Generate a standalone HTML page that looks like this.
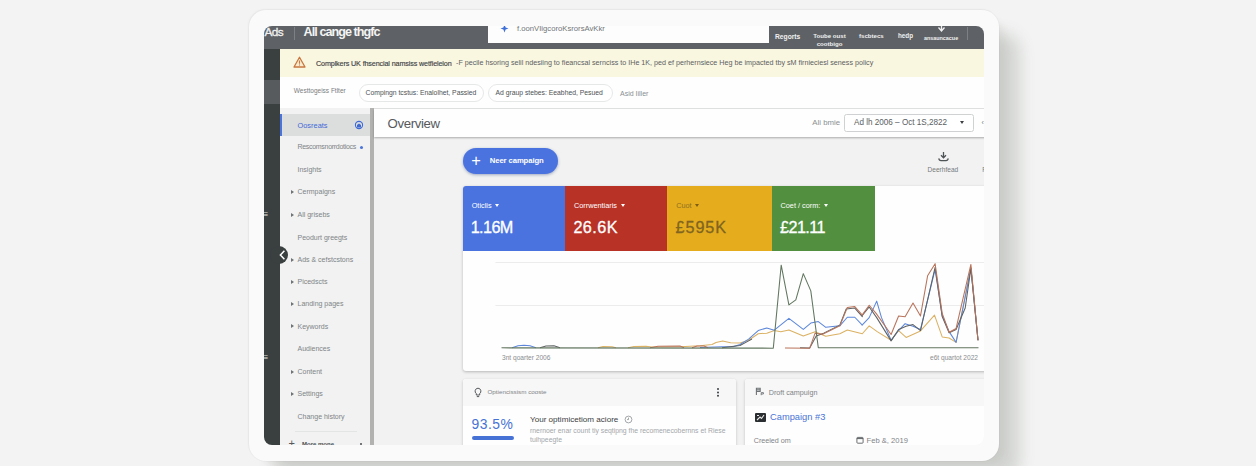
<!DOCTYPE html>
<html><head><meta charset="utf-8">
<style>
html,body{margin:0;padding:0;}
body{width:1256px;height:466px;overflow:hidden;position:relative;background:#f2f3f2;font-family:"Liberation Sans",sans-serif;}
.abs{position:absolute;}
#bg{left:0;top:0;width:1256px;height:466px;background:#f2f3f2;}
#shadow{left:252px;top:14px;width:745px;height:445px;border-radius:17px;box-shadow:22px 20px 16px rgba(95,98,90,.22),8px 5px 6px rgba(95,98,90,.06);}
#frame{left:249.3px;top:10px;width:749.7px;height:451px;border-radius:17px;background:#f9faf9;box-shadow:0 0 0 1px rgba(0,0,0,.02),-1px -1px 2px rgba(0,0,0,.035);}
#screen{left:264px;top:26px;width:720px;height:419px;border-radius:8px;overflow:hidden;background:#f1f2f1;}
#screen .abs{white-space:nowrap;}
.t{line-height:1;}
</style></head><body>
<div id="bg" class="abs"></div>
<div id="shadow" class="abs"></div>
<div id="frame" class="abs"></div>
<div id="screen" class="abs">
<!-- coordinates inside screen are page coords minus (264,26) -->
<div id="in" class="abs" style="left:-264px;top:-26px;width:1256px;height:466px;">
<div class="abs" style="left:264px;top:26px;width:720px;height:23.2px;background:#5e6266;"></div>
<div class="abs t" style="left:264.4px;top:27px;font-size:11.8px;color:#f1f1f1;letter-spacing:-.55px;-webkit-text-stroke:.3px #f1f1f1;">Ads</div>
<div class="abs" style="left:294px;top:27px;width:1px;height:12.5px;background:#7d8084;"></div>
<div class="abs t" style="left:303.6px;top:26.2px;font-size:12.6px;color:#f4f4f4;font-weight:bold;letter-spacing:-.95px;">All cange thgfc</div>
<div class="abs" style="left:488.2px;top:26px;width:281px;height:17.4px;background:#fdfdfd;"></div>
<svg class="abs" style="left:499.8px;top:24.2px;" width="9" height="9" viewBox="0 0 9 9"><path d="M4.5 0.5 L5.6 3.4 L8.5 4.5 L5.6 5.6 L4.5 8.5 L3.4 5.6 L0.5 4.5 L3.4 3.4Z" fill="#3f6fd8"/></svg>
<div class="abs t" style="left:517px;top:24.5px;font-size:7.7px;color:#727578;">f.oonVIigcoroKsrorsAvKkr</div>
<div class="abs t" style="left:775px;top:33.6px;font-size:6.7px;color:#f0f0f0;font-weight:bold;">Regorts</div>
<div class="abs t" style="left:809.5px;top:32.4px;width:40px;text-align:center;font-size:6.1px;line-height:8.1px;color:#f0f0f0;font-weight:bold;white-space:normal;">Toube oust cootbigo</div>
<div class="abs t" style="left:859px;top:33.2px;font-size:6.1px;color:#f0f0f0;font-weight:bold;">fscbtecs</div>
<div class="abs t" style="left:898px;top:33.2px;font-size:6.3px;color:#f0f0f0;font-weight:bold;">hedp</div>
<svg class="abs" style="left:936px;top:25px;" width="11" height="9" viewBox="0 0 11 9"><path d="M5.5 0v7M2.5 2.5L5.5 6L8.5 2.5" stroke="#f0f0f0" stroke-width="1.3" fill="none"/></svg>
<div class="abs t" style="left:924px;top:35.6px;font-size:5.4px;color:#f0f0f0;font-weight:bold;">ansauncacue</div>
<div class="abs" style="left:967px;top:27px;width:1px;height:12.5px;background:#7d8084;"></div>
<div class="abs" style="left:264px;top:49px;width:16px;height:400px;background:#3a3f40;"></div>
<div class="abs" style="left:264px;top:80px;width:16px;height:24px;background:#585b5d;"></div>
<div class="abs t" style="left:263.6px;top:210.6px;font-size:8px;color:#e4e5e5;font-weight:bold;">≡</div>
<div class="abs t" style="left:263.6px;top:353.6px;font-size:8px;color:#e4e5e5;font-weight:bold;">≡</div>

<div class="abs" style="left:279.5px;top:49px;width:710px;height:28px;background:#faf7e1;"></div>
<svg class="abs" style="left:293px;top:56px;" width="13" height="12" viewBox="0 0 13 12"><path d="M6.5 1.2L12 11H1Z" fill="#f7ecd0" stroke="#c9773f" stroke-width="1.3" stroke-linejoin="round"/><path d="M6.5 4.5v3.2M6.5 8.6v1" stroke="#c9773f" stroke-width="1.1"/></svg>
<div class="abs t" style="left:316px;top:59.5px;font-size:7.2px;letter-spacing:-.13px;color:#3c4043;-webkit-text-stroke:.15px #45494c;">Complkers UK fhsencial namsiss wetfieleion</div>
<div class="abs t" style="left:456px;top:59.5px;font-size:7.17px;color:#5c5f62;">-F pecile hsoring selil ndesiing to fieancsal sernciss to IHe 1K, ped ef perhernsiece Heg be impacted tby sM firnieciesl seness policy</div>

<div class="abs" style="left:279.5px;top:77px;width:710px;height:31.6px;background:#fefefe;border-bottom:1px solid #e3e4e4;box-sizing:border-box;"></div>
<div class="abs t" style="left:293.8px;top:87.6px;font-size:6.5px;color:#7b7d80;">Westtogeiss Ftlter</div>
<div class="abs" style="left:358.5px;top:83.5px;width:125.5px;height:18px;border:1px solid #e6e7e7;border-radius:10px;box-sizing:border-box;background:#fff;"></div>
<div class="abs t" style="left:365.6px;top:89.6px;font-size:6.8px;color:#4d5154;">Compingn tcstus: Enalolhet, Passied</div>
<div class="abs" style="left:488.3px;top:83.5px;width:124.5px;height:18px;border:1px solid #e6e7e7;border-radius:10px;box-sizing:border-box;background:#fff;"></div>
<div class="abs t" style="left:495.5px;top:89.6px;font-size:6.8px;color:#4d5154;">Ad graup stebes: Eeabhed, Pesued</div>
<div class="abs t" style="left:620px;top:89.6px;font-size:7px;color:#8a8e92;">Asid Iiller</div>

<div class="abs" style="left:280px;top:108px;width:90px;height:340px;background:#f1f2f1;"></div>
<div class="abs" style="left:369.5px;top:108px;width:4.4px;height:340px;background:#b2b3b1;"></div>
<div class="abs" style="left:280px;top:113.5px;width:89.5px;height:22.4px;background:#dcdddd;"></div>
<div class="abs" style="left:279.5px;top:113.5px;width:2.4px;height:22.4px;background:#4a74dc;"></div>
<div class="abs t" style="left:297.5px;top:121.5px;font-size:7.4px;color:#3f6ad6;">Oosreats</div>
<svg class="abs" style="left:354px;top:120px;" width="10" height="10" viewBox="0 0 10 10"><circle cx="5" cy="5" r="3.6" fill="none" stroke="#3f6ad6" stroke-width="1.1"/><path d="M3 7.5V5L5 3.4L7 5V7.5Z" fill="#3f6ad6"/></svg>
<div class="abs t" style="left:297.5px;top:143.0px;font-size:7px;letter-spacing:-.3px;color:#7f8488;">Rescomsnorrdotiocs</div>
<div class="abs t" style="left:297.5px;top:165.9px;font-size:7px;color:#7f8488;">Insights</div>
<div class="abs t" style="left:297.5px;top:188.0px;font-size:7px;color:#7f8488;">Cermpaigns</div>
<div class="abs" style="left:291px;top:190.0px;width:0;height:0;border-left:3.3px solid #6f7376;border-top:2.1px solid transparent;border-bottom:2.1px solid transparent;margin-top:-.2px;"></div>
<div class="abs t" style="left:297.5px;top:210.7px;font-size:7px;color:#7f8488;">All grisebs</div>
<div class="abs" style="left:291px;top:212.7px;width:0;height:0;border-left:3.3px solid #6f7376;border-top:2.1px solid transparent;border-bottom:2.1px solid transparent;margin-top:-.2px;"></div>
<div class="abs t" style="left:297.5px;top:233.5px;font-size:7px;color:#7f8488;">Peodurt greegts</div>
<div class="abs t" style="left:297.5px;top:255.8px;font-size:7px;color:#7f8488;">Ads &amp; cefstcstons</div>
<div class="abs" style="left:291px;top:257.8px;width:0;height:0;border-left:3.3px solid #6f7376;border-top:2.1px solid transparent;border-bottom:2.1px solid transparent;margin-top:-.2px;"></div>
<div class="abs t" style="left:297.5px;top:277.7px;font-size:7px;color:#7f8488;">Picedscts</div>
<div class="abs" style="left:291px;top:279.7px;width:0;height:0;border-left:3.3px solid #6f7376;border-top:2.1px solid transparent;border-bottom:2.1px solid transparent;margin-top:-.2px;"></div>
<div class="abs t" style="left:297.5px;top:300.2px;font-size:7px;color:#7f8488;">Landing pages</div>
<div class="abs" style="left:291px;top:302.2px;width:0;height:0;border-left:3.3px solid #6f7376;border-top:2.1px solid transparent;border-bottom:2.1px solid transparent;margin-top:-.2px;"></div>
<div class="abs t" style="left:297.5px;top:322.5px;font-size:7px;color:#7f8488;">Keywords</div>
<div class="abs" style="left:291px;top:324.5px;width:0;height:0;border-left:3.3px solid #6f7376;border-top:2.1px solid transparent;border-bottom:2.1px solid transparent;margin-top:-.2px;"></div>
<div class="abs t" style="left:297.5px;top:345.2px;font-size:7px;color:#7f8488;">Audiences</div>
<div class="abs t" style="left:297.5px;top:368.0px;font-size:7px;color:#7f8488;">Content</div>
<div class="abs" style="left:291px;top:370.0px;width:0;height:0;border-left:3.3px solid #6f7376;border-top:2.1px solid transparent;border-bottom:2.1px solid transparent;margin-top:-.2px;"></div>
<div class="abs t" style="left:297.5px;top:390.2px;font-size:7px;color:#7f8488;">Settings</div>
<div class="abs" style="left:291px;top:392.2px;width:0;height:0;border-left:3.3px solid #6f7376;border-top:2.1px solid transparent;border-bottom:2.1px solid transparent;margin-top:-.2px;"></div>
<div class="abs t" style="left:297.5px;top:412.7px;font-size:7px;color:#7f8488;">Change history</div>
<div class="abs" style="left:360px;top:146px;width:3px;height:3px;border-radius:2px;background:#4a74dc;"></div>
<div class="abs" style="left:295px;top:430.5px;width:62px;height:1px;background:#e3e4e4;"></div>
<div class="abs t" style="left:288.6px;top:437.8px;font-size:11px;color:#55595c;">+</div>
<div class="abs t" style="left:302px;top:440.5px;font-size:6px;color:#4a4e51;font-weight:bold;">More mone</div>
<div class="abs" style="left:360px;top:442.5px;width:2.4px;height:2.4px;border-radius:2px;background:#4a4e51;"></div>
<div class="abs" style="left:270.4px;top:246px;width:18px;height:18px;border-radius:9px;background:#3a3f40;"></div>
<svg class="abs" style="left:274.8px;top:248px;" width="14" height="14" viewBox="0 0 14 14"><path d="M9.4 2.8L5.4 7L9.4 11.2" stroke="#fff" stroke-width="1.5" fill="none"/></svg>

<div class="abs" style="left:373.9px;top:108.6px;width:620px;height:28px;background:#fefefe;box-shadow:0 1px 2px rgba(0,0,0,.3);"></div>
<div class="abs t" style="left:387.6px;top:117.1px;font-size:13.2px;color:#56595c;letter-spacing:-.35px;">Overview</div>
<div class="abs t" style="left:812.3px;top:119.4px;font-size:7.8px;color:#8a8e91;">Ali bmie</div>
<div class="abs" style="left:844.2px;top:113.6px;width:129.6px;height:18px;border:1px solid #cfd1d2;border-radius:2.5px;box-sizing:border-box;background:#fff;"></div>
<div class="abs t" style="left:854px;top:119.2px;font-size:8.15px;color:#5a5e62;">Ad lh 2006 – Oct 1S,2822</div>
<div class="abs" style="left:960.2px;top:121.3px;width:0;height:0;border-top:3px solid #3c4043;border-left:2.7px solid transparent;border-right:2.7px solid transparent;"></div>
<div class="abs t" style="left:981.5px;top:119px;font-size:7px;color:#777;">‹</div>
<div class="abs" style="left:462.6px;top:147.6px;width:95px;height:26.8px;border-radius:14px;background:#4a73e0;box-shadow:0 1px 3px rgba(60,80,140,.45);"></div>
<div class="abs t" style="left:471.3px;top:152.2px;font-size:16.4px;color:#fff;">+</div>
<div class="abs t" style="left:489.8px;top:157.2px;font-size:7.7px;color:#fff;font-weight:bold;letter-spacing:-.1px;">Neer campaign</div>
<svg class="abs" style="left:936.6px;top:151.2px;" width="13" height="13" viewBox="0 0 13 13"><path d="M6.5 1v5.6M4 4.2L6.5 6.8L9 4.2" stroke="#4f5356" stroke-width="1.3" fill="none"/><path d="M1.8 7.4Q2 9.6 4 9.6H9Q11 9.6 11.2 7.4" stroke="#4f5356" stroke-width="1.2" fill="none"/></svg>
<div class="abs t" style="left:927.6px;top:166.6px;font-size:6.55px;color:#777b7e;">Deerhfead</div>
<div class="abs t" style="left:982.3px;top:166.6px;font-size:6.55px;color:#777b7e;">F</div>
<div class="abs" style="left:462.6px;top:186.4px;width:540px;height:184.3px;background:#fefefe;border-radius:3px;box-shadow:0 1px 3px rgba(0,0,0,.25);"></div>
<div class="abs" style="left:462.6px;top:186.4px;width:102px;height:65px;background:#4a73e0;border-radius:3px 0 0 0;"></div>
<div class="abs" style="left:564.5px;top:186.4px;width:103px;height:65px;background:#b83226;"></div>
<div class="abs" style="left:667.3px;top:186.4px;width:105px;height:65px;background:#e5ad1e;"></div>
<div class="abs" style="left:772px;top:186.4px;width:103.3px;height:65px;background:#52903f;"></div>
<div class="abs t" style="left:471.7px;top:201.6px;font-size:7.3px;color:#fff;">Oticlis<span style="display:inline-block;width:0;height:0;border-top:3px solid #fff;border-left:2.8px solid transparent;border-right:2.8px solid transparent;margin-left:3.8px;vertical-align:1px;"></span></div>
<div class="abs t" style="left:574px;top:201.6px;font-size:7.3px;color:#fff;">Corrwentiaris<span style="display:inline-block;width:0;height:0;border-top:3px solid #fff;border-left:2.8px solid transparent;border-right:2.8px solid transparent;margin-left:3.8px;vertical-align:1px;"></span></div>
<div class="abs t" style="left:676.2px;top:201.6px;font-size:7.3px;color:#8f6f1e;">Cuot<span style="display:inline-block;width:0;height:0;border-top:3px solid #7d5e14;border-left:2.8px solid transparent;border-right:2.8px solid transparent;margin-left:3.8px;vertical-align:1px;"></span></div>
<div class="abs t" style="left:780.5px;top:201.6px;font-size:7.3px;color:#fff;">Coet / corm:<span style="display:inline-block;width:0;height:0;border-top:3px solid #fff;border-left:2.8px solid transparent;border-right:2.8px solid transparent;margin-left:3.8px;vertical-align:1px;"></span></div>
<div class="abs t" style="left:470.7px;top:218.6px;font-size:16.2px;color:#fff;-webkit-text-stroke:.3px #fff;letter-spacing:-.6px;">1.16M</div>
<div class="abs t" style="left:573.4px;top:218.6px;font-size:16.2px;color:#fff;-webkit-text-stroke:.3px #fff;letter-spacing:.45px;">26.6K</div>
<div class="abs t" style="left:675.6px;top:218.6px;font-size:16.2px;color:#80641f;-webkit-text-stroke:.3px #80641f;letter-spacing:.9px;">£595K</div>
<div class="abs t" style="left:780px;top:218.6px;font-size:16.2px;color:#fff;-webkit-text-stroke:.3px #fff;letter-spacing:-.55px;">£21.11</div>
<svg class="abs" style="left:462px;top:186px;" width="530" height="185" viewBox="0 0 530 185">
<path d="M33.5 76.5H522M33.5 119.5H522" stroke="#ececec" stroke-width="1"/>
<g fill="none" stroke-width="1.05" stroke-linejoin="round" transform="translate(0,.45)">
<path d="M136.0 161.2 L141.0 160.0 L150.0 160.2 L154.0 161.2 M166.0 161.2 L172.0 160.0 L184.0 159.8 L190.0 160.6 L218.0 160.4 L238.0 159.2 L250.0 158.0 L254.0 156.0 L260.7 154.6 L268.6 156.2 L278.0 156.6 L286.6 153.8 L296.2 147.3 L304.8 146.7 L312.3 144.1 L318.8 145.2 L326.9 143.5 L341.3 149.5 L353.1 145.2 L363.8 149.9 L377.8 147.3 L385.3 143.5 L400.3 147.3 L407.2 139.4 L415.2 145.2 L429.1 153.8 L436.6 144.1 L444.1 151.0 L458.5 144.5 L472.5 128.7 L480.2 150.5 L487.1 151.6 L494.1 155.9 L508.9 80.8 L516.0 153.8" stroke="#dbb163"/>
<path d="M50.0 161.2 L56.0 159.4 L62.0 158.8 L68.0 159.4 L74.0 161.2 M238.0 161.0 L260.0 160.2 L271.0 160.4 L278.0 158.1 L286.6 152.7 L296.2 144.1 L304.8 141.5 L312.3 143.7 L326.9 131.9 L341.3 143.0 L348.8 136.6 L356.3 135.1 L363.8 140.9 L377.8 139.4 L385.3 130.8 L392.8 130.8 L400.3 138.7 L400.1 138.7 L407.2 131.2 L414.7 114.7 L419.5 131.2 L429.1 153.8 L436.6 144.1 L443.1 137.2 L451.0 139.8 L458.5 143.0 L473.1 82.9 L480.2 129.1 L487.1 145.2 L494.1 155.9 L508.9 81.9 L516.0 153.8" stroke="#5c87da"/>
<path d="M78.0 161.2 L84.0 159.6 L92.0 159.4 L98.0 161.2 M260.0 161.2 L278.0 159.1 L286.6 154.4 L290.0 152.6 M338.0 161.4 L347.7 161.5 L354.2 149.5 L361.7 146.7 L377.8 138.7 L384.2 122.6 L392.8 121.6 L400.3 130.2 L400.1 129.1 L407.2 120.5 L414.7 131.2 L429.1 154.4 L436.6 143.0 L444.1 139.8 L451.0 138.1 L458.5 144.1 L473.1 80.8 L480.2 130.2 L487.1 146.3 L494.1 143.0 L503.2 121.6 L508.9 81.9 L516.0 153.8" stroke="#5e6263"/>
<path d="M188.0 161.2 L196.0 159.8 L218.0 159.6 L222.0 161.2 M230.0 161.2 L235.0 159.6 L242.0 159.6 L246.0 161.2 M323.0 161.5 L347.7 161.7 L353.1 146.7 L360.6 147.8 L377.8 139.4 L385.3 121.1 L392.8 120.1 L400.3 128.7 L400.1 128.7 L407.2 118.8 L414.1 126.9 L429.1 148.0 L436.6 129.5 L443.1 130.2 L451.0 116.6 L458.5 129.5 L465.6 89.4 L473.1 77.2 L480.2 126.9 L487.1 145.8 L494.1 142.0 L508.9 78.0 L516.0 153.8" stroke="#b9735a"/>
<path d="M39.5 161.4 L311.3 161.7 L319.2 78.7 L326.9 118.4 L333.8 113.4 L341.3 87.2 L348.8 104.4 L356.3 161.3 L516.5 161.3" stroke="#61765f"/>
</g>
<text x="40" y="173.5" font-size="6.6" fill="#8a8d90" font-family="Liberation Sans, sans-serif">3nt qoarter 2006</text>
<text x="468" y="173.5" font-size="6.6" fill="#8a8d90" font-family="Liberation Sans, sans-serif">e6t quartot 2022</text>
</svg>
<div class="abs" style="left:462.5px;top:378.5px;width:273.5px;height:80px;background:#fefefe;border-radius:3px;box-shadow:0 1px 3px rgba(0,0,0,.22);"></div>
<div class="abs" style="left:462.5px;top:378.5px;width:273.5px;height:27px;background:#f7f7f7;border-radius:3px 3px 0 0;"></div>
<svg class="abs" style="left:472.5px;top:386.5px;" width="10" height="11" viewBox="0 0 10 11"><path d="M5 1.2a3 3 0 0 1 1.7 5.4V8H3.3V6.6A3 3 0 0 1 5 1.2Z" fill="none" stroke="#54585b" stroke-width="1"/><path d="M3.8 9.6h2.4" stroke="#54585b" stroke-width="1"/></svg>
<div class="abs t" style="left:487.5px;top:389px;font-size:6.25px;color:#7f8387;">Optiencissism cooste</div>
<div class="abs" style="left:716.5px;top:387.5px;width:2px;height:2px;background:#3c4043;border-radius:1px;box-shadow:0 3.4px 0 #3c4043,0 6.8px 0 #3c4043;"></div>
<div class="abs t" style="left:471.6px;top:418.3px;font-size:13.9px;color:#4672d6;letter-spacing:.45px;">93.5%</div>
<div class="abs" style="left:471.5px;top:436px;width:42px;height:3.6px;border-radius:2px;background:#4672d6;"></div>
<div class="abs t" style="left:530px;top:416px;font-size:8.1px;color:#3c4043;">Your optimicetiom aciore</div>
<svg class="abs" style="left:623.8px;top:415px;" width="9" height="9" viewBox="0 0 9 9"><circle cx="4.5" cy="4.5" r="3.4" fill="none" stroke="#8d9194" stroke-width=".8"/><path d="M4.5 2.6V4.6H3" stroke="#8d9194" stroke-width=".8" fill="none"/></svg>
<div class="abs t" style="left:530px;top:427.6px;font-size:6.85px;color:#a4a7aa;">rnernoer enar count tiy seqtipng fhe recomenecobernns et Riese</div>
<div class="abs t" style="left:530px;top:436.8px;font-size:6.85px;color:#a4a7aa;">tuihpeegte</div>
<div class="abs" style="left:744.5px;top:378.5px;width:260px;height:80px;background:#fefefe;border-radius:3px;box-shadow:0 1px 3px rgba(0,0,0,.22);"></div>
<div class="abs" style="left:744.5px;top:378.5px;width:260px;height:27px;background:#f7f7f7;border-radius:3px 0 0 0;"></div>
<svg class="abs" style="left:755px;top:387.4px;" width="10" height="10" viewBox="0 0 10 10"><path d="M1.4 8V1.3H5.2V4.4H1.4M1.4 2.8H5" stroke="#6f7376" stroke-width="1.1" fill="none"/><path d="M6.2 8.2V5.6H8.4V7H6.4" stroke="#6f7376" stroke-width=".9" fill="none"/></svg>
<div class="abs t" style="left:768.7px;top:388.6px;font-size:7.2px;color:#7f8387;">Droft campuign</div>
<div class="abs" style="left:755px;top:412.8px;width:10.8px;height:8.8px;background:#2b2e30;border-radius:1px;"></div>
<svg class="abs" style="left:755px;top:412.8px;" width="11" height="9" viewBox="0 0 11 9"><path d="M2 7L5 4L6.5 5.5L9 2" stroke="#e8e8e8" stroke-width="1.1" fill="none"/><path d="M2 2.5h2" stroke="#e8e8e8" stroke-width="1"/></svg>
<div class="abs t" style="left:770px;top:413.2px;font-size:9.3px;color:#4a74d6;">Campaign #3</div>
<div class="abs t" style="left:753.7px;top:436.5px;font-size:7.2px;color:#7f8387;">Creeled om</div>
<svg class="abs" style="left:856px;top:435.5px;" width="8" height="8" viewBox="0 0 8 8"><rect x=".9" y="1.4" width="6.2" height="5.8" rx=".8" fill="none" stroke="#5a5e61" stroke-width=".9"/><path d="M.9 2.6h6.2" stroke="#5a5e61" stroke-width="1"/></svg>
<div class="abs t" style="left:866.6px;top:436.5px;font-size:7.6px;color:#7f8387;">Feb &amp;, 2019</div>

</div>
</div>
</body></html>
